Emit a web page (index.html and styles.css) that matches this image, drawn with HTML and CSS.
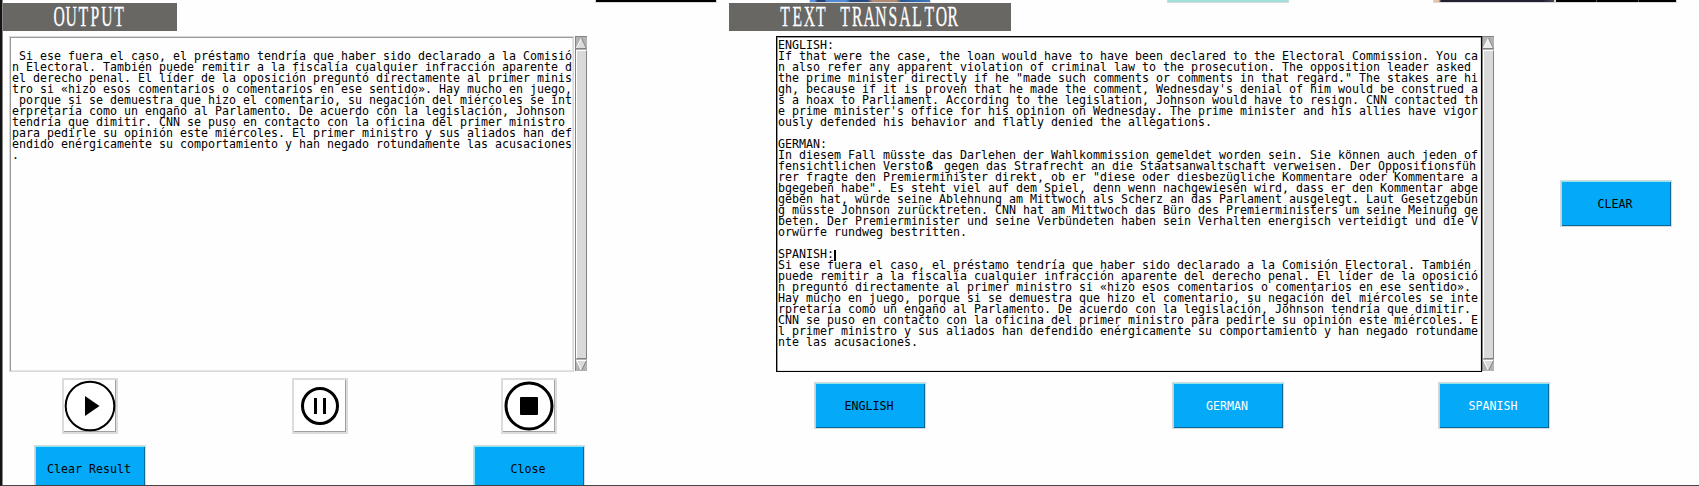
FILE: index.html
```html
<!DOCTYPE html>
<html lang="en">
<head>
<meta charset="utf-8">
<title>Text Translator</title>
<link rel="stylesheet" href="styles.css">
</head>
<body>
<div class="window">
  <div class="strips">
    <i class="strip s-black"></i><i class="strip s-blue"></i><i class="strip s-teal"></i><i class="strip s-face"></i><i class="strip s-night"></i>
  </div>
  <main class="panels">
    <section class="output">
      <h1 class="title title-output"><svg width="174" height="28"><text transform="scale(.55 1)" y="23" x="102 124 146 167 189 211">OUTPUT</text></svg></h1>
      <div class="field">
        <pre class="text text-output">

 Si ese fuera el caso, el préstamo tendría que haber sido declarado a la Comisió
n Electoral. También puede remitir a la fiscalía cualquier infracción aparente d
el derecho penal. El líder de la oposición preguntó directamente al primer minis
tro si «hizo esos comentarios o comentarios en ese sentido». Hay mucho en juego,
 porque si se demuestra que hizo el comentario, su negación del miércoles se int
erpretaría como un engaño al Parlamento. De acuerdo con la legislación, Johnson
tendría que dimitir. CNN se puso en contacto con la oficina del primer ministro
para pedirle su opinión este miércoles. El primer ministro y sus aliados han def
endido enérgicamente su comportamiento y han negado rotundamente las acusaciones
.</pre>
        <div class="scroll">
          <svg width="11" height="12"><path fill="#b3b3b3" d="M0 0h11v12H0z"/><path fill="#d9d9d9" d="M5.500 1 10.500 11H.5z"/><path stroke="#fff" fill="none" d="M.5 11 5.500 1"/><path stroke="#828282" fill="none" d="M5.500 1l5 10.500H0"/></svg>
          <div class="thumb"></div>
          <svg width="11" height="11"><path fill="#b3b3b3" d="M0 0h11v11H0z"/><path fill="#d9d9d9" d="M.5 .5h10l-5 10z"/><path stroke="#fff" fill="none" d="M10.500 .5H.5l5 10"/><path stroke="#828282" fill="none" d="M10.500 .5l-5 10"/></svg>
        </div>
      </div>
      <div class="media">
        <button class="icon" aria-label="Play"><svg width="52" height="52"><circle cx="26" cy="26" r="24.300" fill="none" stroke="#000" stroke-width="2"/><path d="M21 16v20l14.500-10z"/></svg></button>
        <button class="icon" aria-label="Pause"><svg width="52" height="52"><circle cx="26" cy="26" r="17.500" fill="none" stroke="#000" stroke-width="3"/><path d="M20 18h3v16h-3zM29 18h3v16h-3z"/></svg></button>
        <button class="icon" aria-label="Stop"><svg width="52" height="52"><circle cx="26" cy="26" r="23" fill="none" stroke="#000" stroke-width="3"/><rect x="17" y="17" width="18" height="18" rx="1"/></svg></button>
      </div>
      <div class="actions"><button class="btn">Clear Result</button><button class="btn">Close</button></div>
    </section>
    <section class="translator">
      <h1 class="title title-translator"><svg width="282" height="28"><text transform="scale(.55 1)" y="23" x="102 124 146 167 189 211 233 255 276 298 320 342 364 386 407">TEXT TRANSALTOR</text></svg></h1>
      <div class="field">
        <pre class="text text-translator">ENGLISH:
If that were the case, the loan would have to have been declared to the Electoral Commission. You ca
n also refer any apparent violation of criminal law to the prosecution. The opposition leader asked
the prime minister directly if he "made such comments or comments in that regard." The stakes are hi
gh, because if it is proven that he made the comment, Wednesday's denial of him would be construed a
s a hoax to Parliament. According to the legislation, Johnson would have to resign. CNN contacted th
e prime minister's office for his opinion on Wednesday. The prime minister and his allies have vigor
ously defended his behavior and flatly denied the allegations.

GERMAN:
In diesem Fall müsste das Darlehen der Wahlkommission gemeldet worden sein. Sie können auch jeden of
fensichtlichen Versto<b>ß</b> gegen das Strafrecht an die Staatsanwaltschaft verweisen. Der Oppositionsfüh
rer fragte den Premierminister direkt, ob er "diese oder diesbezügliche Kommentare oder Kommentare a
bgegeben habe". Es steht viel auf dem Spiel, denn wenn nachgewiesen wird, dass er den Kommentar abge
geben hat, würde seine Ablehnung am Mittwoch als Scherz an das Parlament ausgelegt. Laut Gesetzgebun
g müsste Johnson zurücktreten. CNN hat am Mittwoch das Büro des Premierministers um seine Meinung ge
beten. Der Premierminister und seine Verbündeten haben sein Verhalten energisch verteidigt und die V
orwürfe rundweg bestritten.

SPANISH:<i class="caret"></i>
Si ese fuera el caso, el préstamo tendría que haber sido declarado a la Comisión Electoral. También
puede remitir a la fiscalía cualquier infracción aparente del derecho penal. El líder de la oposició
n preguntó directamente al primer ministro si «hizo esos comentarios o comentarios en ese sentido».
Hay mucho en juego, porque si se demuestra que hizo el comentario, su negación del miércoles se inte
rpretaría como un engaño al Parlamento. De acuerdo con la legislación, Johnson tendría que dimitir.
CNN se puso en contacto con la oficina del primer ministro para pedirle su opinión este miércoles. E
l primer ministro y sus aliados han defendido enérgicamente su comportamiento y han negado rotundame
nte las acusaciones.</pre>
        <div class="scroll">
          <svg width="11" height="12"><path fill="#b3b3b3" d="M0 0h11v12H0z"/><path fill="#ececec" d="M5.500 1 10.500 11H.5z"/><path stroke="#fff" fill="none" d="M.5 11 5.500 1"/><path stroke="#828282" fill="none" d="M5.500 1l5 10.500H0"/></svg>
          <div class="thumb"></div>
          <svg width="11" height="11"><path fill="#b3b3b3" d="M0 0h11v11H0z"/><path fill="#d9d9d9" d="M.5 .5h10l-5 10z"/><path stroke="#fff" fill="none" d="M10.500 .5H.5l5 10"/><path stroke="#828282" fill="none" d="M10.500 .5l-5 10"/></svg>
        </div>
      </div>
      <div class="languages"><button class="btn">ENGLISH</button><button class="btn light">GERMAN</button><button class="btn light">SPANISH</button></div>
    </section>
    <aside class="side"><button class="btn">CLEAR</button></aside>
  </main>
</div>
</body>
</html>
```
FILE: styles.css
```css
* { box-sizing: border-box; }
body { margin: 0; background: #fefefe; overflow: hidden; }
svg { display: block; overflow: visible; }
.window {
  width: 1699px; height: 486px; overflow: hidden;
  border-left: 2px solid #141414; border-bottom: 1px solid #444;
  box-shadow: inset 1px 0 #8a8a8a;
}
.strips { display: flex; height: 3px; padding-left: 593px; }
.strip { width: 122px; height: 3px; border: 1px solid #d9d9d9; border-top: 0; }
.s-black { background: #000; }
.s-blue { margin-left: 92px; background: linear-gradient(90deg, #5b93dc 0 4%, #24406e 6% 12%, #4f8ad8 14% 30%, #264a80 34% 48%, #b08a72 52% 72%, #2a5590 76%, #3d7ac4); }
.s-teal { margin-left: 236px; background: #9fe0da; }
.s-face { margin-left: 144px; background: linear-gradient(90deg, #e5c3a8 0 4%, #222033 6% 90%, #4a4658); }
.s-night { background: linear-gradient(90deg, #000 0 33%, #555 33% 34%, #000 34% 68%, #555 68% 69%, #000 69%); }

.panels { display: flex; padding-left: 1px; }
.output { width: 726px; }
.translator { width: 831px; }
.side { padding-top: 177px; }

.title { margin: 0; height: 28px; background: #696764; }
.title-output { width: 174px; }
.title-translator { width: 282px; }
.title text { font: 28.5px "Liberation Serif", serif; fill: #fff; stroke: #fff; stroke-width: .3px; text-anchor: middle; }

.field { display: flex; margin-top: 5px; height: 336px; }
.output .field { margin-left: 6px; }
.translator .field { margin-left: 47px; }
.text {
  margin: 0; border: 1px solid #d9d9d9; padding: 3px 0 0 2px;
  font: 11.63px/11px "DejaVu Sans Mono", monospace; color: #000;
  box-shadow: inset 1px 1px #999, inset -1px -1px #e6e6e6;
}
.text-output { width: 565px; }
.text-translator { width: 706px; padding-left: 1px; border-color: #000; }
.text b { padding: 0 4px 0 1px; font-weight: 700; }
.caret { display: inline-block; width: 2px; height: 11px; margin: -2px 0; vertical-align: -1px; background: #000; }

.scroll {
  display: flex; flex-direction: column; width: 12px; height: 335px;
  border: 1px solid #828282; border-bottom: 0; border-right: 0; background: #b3b3b3;
}
.output .scroll { margin-left: 1px; }
.thumb { flex: 1; margin: 1px 0; background: #d9d9d9; border: 1px solid #fff; border-right-color: #828282; border-bottom-color: #828282; }

button { display: block; margin: 0; padding: 0; border-radius: 0; }
.media { display: grid; grid-template-columns: 230px 209px 56px; margin: 6px 0 0 59px; }
.icon {
  width: 56px; height: 56px; border: 2px solid #dcdcdc; background: #fff;
  box-shadow: inset -1px -1px #a0a0a0;
}
.icon svg { width: 52px; height: 52px; margin: 0; }
.actions { display: flex; justify-content: space-between; width: 551px; margin: 11px 0 0 31px; }
.languages { display: grid; grid-template-columns: 358px 266px 112px; margin: 10px 0 0 85px; }
.btn {
  width: 112px; height: 47px; border: 1px solid #d6dada; background: #04a9f7; color: #000;
  padding: 2px 2px 0 0;
  font: 11.63px/11px "DejaVu Sans Mono", monospace;
  box-shadow: inset 1px 1px #8ce6ef, inset -1px -1px #0a6799; text-align: center;
}
.actions .btn { height: 48px; padding-top: 1px; }
.light { color: #fff; }
```
